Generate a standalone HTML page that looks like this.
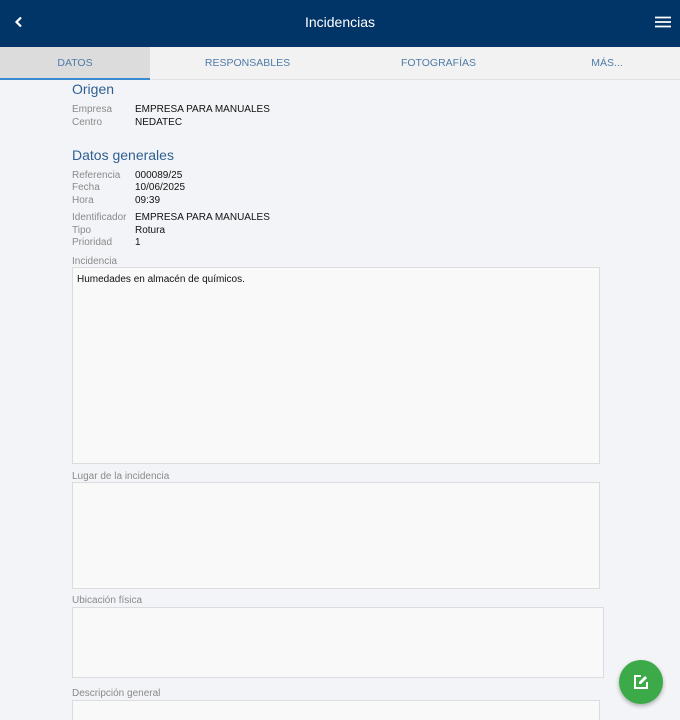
<!DOCTYPE html>
<html><head><style>
*{margin:0;padding:0;box-sizing:border-box}
html,body{width:680px;height:720px;overflow:hidden}
body{background:#f3f4f7;font-family:"Liberation Sans",sans-serif;position:relative}
.a{position:absolute;white-space:nowrap}
.hd{left:0;top:0;width:680px;height:47px;background:#023567}
.tb{left:0;top:47px;width:680px;height:33px;background:#f2f2f2;border-bottom:1px solid #e2e2e2}
.tab{top:47px;height:33px;line-height:33px;font-size:10.5px;color:#4f7ba8;text-align:center}
.lb{font-size:10px;color:#8a8a8a;left:72px}
.vl{font-size:10px;color:#111;left:135px}
.h{font-size:14px;color:#2f5f92;left:72px}
.box{background:#f9f9f9;border:1px solid #dcdcdc}
</style></head><body>
<div class="a hd"></div>
<svg class="a" style="left:13px;top:16px" width="12" height="12" viewBox="0 0 12 12"><path d="M8 1.5 L3.5 6 L8 10.5" stroke="#fff" stroke-width="2.2" fill="none"/></svg>
<div class="a" style="left:0;width:680px;top:14px;text-align:center;color:#fff;font-size:14px">Incidencias</div>
<svg class="a" style="left:655px;top:16px" width="16" height="12" viewBox="0 0 16 12"><path d="M0 1.5H16M0 6H16M0 10.5H16" stroke="#fff" stroke-width="1.8"/></svg>
<div class="a tb"></div>
<div class="a" style="left:0;top:47px;width:150px;height:33px;background:#dcdcdc;border-bottom:2px solid #3a8ad0"></div>
<div class="a tab" style="left:0;width:150px">DATOS</div>
<div class="a tab" style="left:150px;width:195px">RESPONSABLES</div>
<div class="a tab" style="left:340px;width:197px">FOTOGRAFÍAS</div>
<div class="a tab" style="left:537px;width:140px">MÁS...</div>
<div class="a h" style="top:81px">Origen</div>
<div class="a lb" style="top:104px">Empresa</div><div class="a vl" style="top:104px">EMPRESA PARA MANUALES</div>
<div class="a lb" style="top:117px">Centro</div><div class="a vl" style="top:117px">NEDATEC</div>
<div class="a h" style="top:147px">Datos generales</div>
<div class="a lb" style="top:170px">Referencia</div><div class="a vl" style="top:170px">000089/25</div>
<div class="a lb" style="top:182px">Fecha</div><div class="a vl" style="top:182px">10/06/2025</div>
<div class="a lb" style="top:195px">Hora</div><div class="a vl" style="top:195px">09:39</div>
<div class="a lb" style="top:212px">Identificador</div><div class="a vl" style="top:212px">EMPRESA PARA MANUALES</div>
<div class="a lb" style="top:225px">Tipo</div><div class="a vl" style="top:225px">Rotura</div>
<div class="a lb" style="top:237px">Prioridad</div><div class="a vl" style="top:237px">1</div>
<div class="a lb" style="top:256px">Incidencia</div>
<div class="a box" style="left:72px;top:267px;width:528px;height:197px"></div>
<div class="a vl" style="left:77px;top:274px">Humedades en almacén de químicos.</div>
<div class="a lb" style="top:471px">Lugar de la incidencia</div>
<div class="a box" style="left:72px;top:482px;width:528px;height:107px"></div>
<div class="a lb" style="top:595px">Ubicación física</div>
<div class="a box" style="left:72px;top:607px;width:532px;height:71px"></div>
<div class="a lb" style="top:688px">Descripción general</div>
<div class="a box" style="left:72px;top:700px;width:528px;height:30px"></div>
<div class="a" style="left:619px;top:660px;width:44px;height:44px;border-radius:50%;background:#3daa4a;box-shadow:0 2px 4px rgba(0,0,0,.3)"></div>
<svg class="a" style="left:633px;top:674px" width="16" height="16" viewBox="0 0 16 16"><path d="M8 2H2V14H14V8" stroke="#fff" stroke-width="2" fill="none"/><path d="M6 10V8L12 2L14 4L8 10Z" fill="#fff"/></svg>
</body></html>
